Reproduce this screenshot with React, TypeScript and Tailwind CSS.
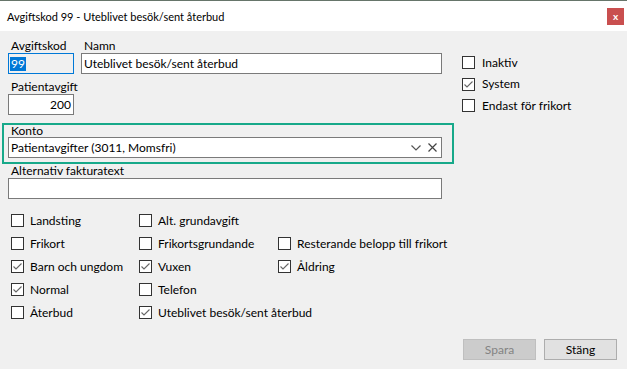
const font = "font-['Lato','Liberation_Sans',sans-serif]";

function CheckBox({ label, checked = false }: { label: string; checked?: boolean }) {
  return (
    <div className="flex items-center h-[23px]">
      <div className="w-[13px] h-[13px] border border-[#333] bg-white flex items-center justify-center shrink-0">
        {checked && (
          <svg width="11" height="11" viewBox="0 0 11 11">
            <polyline points="1.5,5.5 4,8 9.5,2.5" fill="none" stroke="#666" strokeWidth="1.1" />
          </svg>
        )}
      </div>
      <span className="ml-[6px] leading-[14px] whitespace-nowrap">{label}</span>
    </div>
  );
}

function RightCheck({ label, checked = false }: { label: string; checked?: boolean }) {
  return (
    <div className="flex items-center h-[13px]">
      <div className="w-[13px] h-[13px] border border-[#333] bg-white flex items-center justify-center shrink-0">
        {checked && (
          <svg width="11" height="11" viewBox="0 0 11 11">
            <polyline points="1.5,5.5 4,8 9.5,2.5" fill="none" stroke="#666" strokeWidth="1.1" />
          </svg>
        )}
      </div>
      <span className="ml-[7px] leading-[14px] whitespace-nowrap">{label}</span>
    </div>
  );
}

export default function App() {
  return (
    <div className={`w-[627px] h-[369px] overflow-hidden bg-[#f0f0f0] text-[12px] text-black ${font}`}>
      {/* title bar */}
      <div className="h-[31px] border-t border-[#66756a] bg-white flex items-center justify-between pl-[7px] pr-[3px]">
        <span className="text-[11px] leading-[14px] mt-[2px]">Avgiftskod 99 - Uteblivet besök/sent återbud</span>
        <div className="w-[17px] h-[17px] bg-[#c94f4f] flex items-center justify-center text-white font-bold text-[10px] leading-none">
          x
        </div>
      </div>

      <div className="flex pt-[8px]">
        {/* left column */}
        <div className="w-[462px]">
          <div className="flex pl-[8px] gap-[7px]">
            <div className="w-[66px]">
              <div className="pl-[3px] leading-[14px]">Avgiftskod</div>
              <div className="h-[21px] border border-[#0078d7] bg-[#f0f0f0] flex items-center pl-[1px]">
                <span className="bg-[#0078d7] text-white leading-[14px] px-[1px]">99</span>
              </div>
            </div>
            <div className="w-[361px]">
              <div className="pl-[3px] leading-[14px]">Namn</div>
              <div className="h-[21px] border border-[#7a7a7a] bg-white flex items-center pl-[2px]">
                Uteblivet besök/sent återbud
              </div>
            </div>
          </div>

          <div className="pl-[8px] mt-[6px]">
            <div className="pl-[3px] leading-[14px]">Patientavgift</div>
            <div className="w-[66px] h-[21px] border border-[#7a7a7a] bg-white flex items-center justify-end pr-[2px]">
              200
            </div>
          </div>

          <div className="ml-[2px] mt-[8px] w-[452px] border-2 border-[#17a98a] pl-[4px] pb-[4px]">
            <div className="pl-[3px] leading-[12px]">Konto</div>
            <div className="w-[434px] h-[21px] border border-[#7a7a7a] bg-white flex items-center pl-[2px] pr-[4px]">
              <span className="flex-1">Patientavgifter (3011, Momsfri)</span>
              <svg width="10" height="6" viewBox="0 0 10 6" className="mr-[7px]">
                <polyline points="0.5,0.5 5,5 9.5,0.5" fill="none" stroke="#555" strokeWidth="1.2" />
              </svg>
              <svg width="9" height="9" viewBox="0 0 9 9">
                <path d="M0.5 0.5 L8.5 8.5 M8.5 0.5 L0.5 8.5" stroke="#444" strokeWidth="1.2" />
              </svg>
            </div>
          </div>

          <div className="pl-[8px]">
            <div className="pl-[3px] leading-[14px]">Alternativ fakturatext</div>
            <div className="w-[434px] h-[21px] border border-[#7a7a7a] bg-white" />
          </div>
        </div>

        {/* right column */}
        <div className="flex flex-col gap-[8.5px] mt-[17px]">
          <RightCheck label="Inaktiv" />
          <RightCheck label="System" checked />
          <RightCheck label="Endast för frikort" />
        </div>
      </div>

      {/* flag checkboxes */}
      <div className="grid grid-cols-[128px_139px_auto] pl-[11px] mt-[10px]">
        <CheckBox label="Landsting" />
        <CheckBox label="Alt. grundavgift" />
        <div />
        <CheckBox label="Frikort" />
        <CheckBox label="Frikortsgrundande" />
        <CheckBox label="Resterande belopp till frikort" />
        <CheckBox label="Barn och ungdom" checked />
        <CheckBox label="Vuxen" checked />
        <CheckBox label="Åldring" checked />
        <CheckBox label="Normal" checked />
        <CheckBox label="Telefon" />
        <div />
        <CheckBox label="Återbud" />
        <CheckBox label="Uteblivet besök/sent återbud" checked />
        <div />
      </div>

      <div className="flex justify-end gap-[8px] pr-[10px] mt-[15px]">
        <button className="w-[73px] h-[21px] bg-[#cccccc] border border-[#bfbfbf] text-[#838383]">Spara</button>
        <button className="w-[73px] h-[21px] bg-[#e1e1e1] border border-[#adadad]">Stäng</button>
      </div>
    </div>
  );
}
